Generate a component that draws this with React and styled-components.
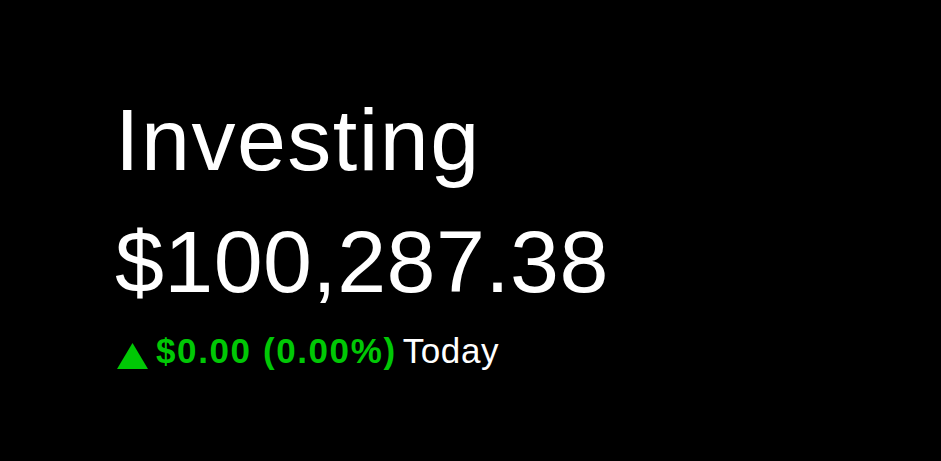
import React from "react";
import styled, { createGlobalStyle } from "styled-components";

const Global = createGlobalStyle`
  html, body { margin: 0; padding: 0; background: #000; }
  body { font-family: "Liberation Sans", Arial, sans-serif; }
`;

const Page = styled.div`
  width: 941px;
  height: 461px;
  background: #000;
  box-sizing: border-box;
  padding: 96px 0 0 115px;
  display: flex;
  flex-direction: column;
`;

const Title = styled.h1`
  margin: 0;
  font-size: 88px;
  font-weight: 400;
  line-height: 1;
  letter-spacing: 1.5px;
  color: #fff;
`;

const Amount = styled.div`
  margin-top: 34px;
  font-size: 88px;
  line-height: 1;
  letter-spacing: 0.4px;
  color: #fff;
`;

const Change = styled.div`
  margin-top: 27px;
  font-size: 35px;
  line-height: 1;
  letter-spacing: 0.6px;
  color: #fff;
  white-space: nowrap;
`;

const Arrow = styled.svg`
  width: 31px;
  height: 26px;
  vertical-align: -6px;
  margin: 0 8px 0 2px;
`;

const Gain = styled.span`
  color: ${p => p.color};
  font-weight: 700;
  letter-spacing: 1.6px;
  margin-right: 6px;
`;

export default function App() {
  const green = "#00c805";
  return (
    <>
      <Global />
      <Page>
        <Title>Investing</Title>
        <Amount>$100,287.38</Amount>
        <Change>
          <Arrow viewBox="0 0 31 26">
            <polygon points="15.5,0 31,26 0,26" fill={green} />
          </Arrow>
          <Gain color={green}>$0.00 (0.00%)</Gain>
          Today
        </Change>
      </Page>
    </>
  );
}
